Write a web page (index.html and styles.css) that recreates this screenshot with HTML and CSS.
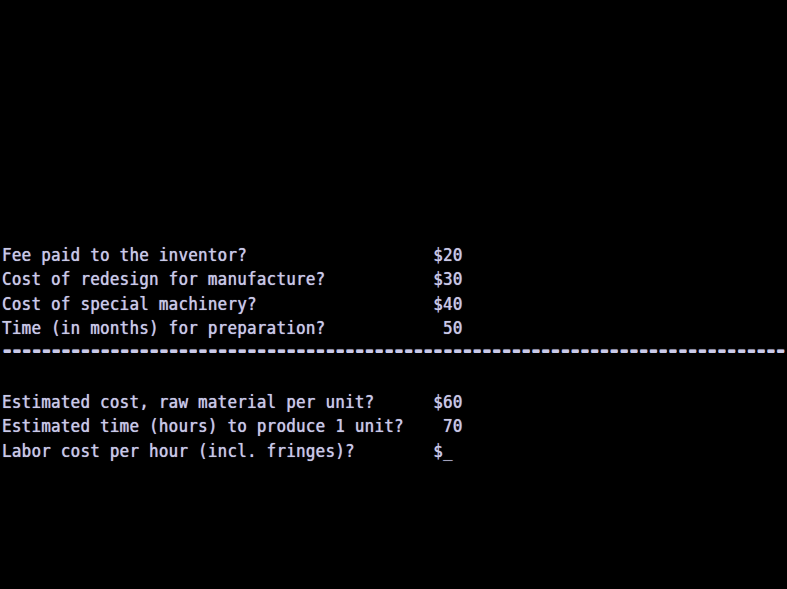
FILE: index.html
```html
<!DOCTYPE html>
<html>
<head>
<meta charset="utf-8">
<link rel="stylesheet" href="styles.css">
</head>
<body>
<main class="screen">
<pre class="term">Fee paid to the inventor?                   $20
Cost of redesign for manufacture?           $30
Cost of special machinery?                  $40
Time (in months) for preparation?            50
<span class="rule">--------------------------------------------------------------------------------</span>

Estimated cost, raw material per unit?      $60
Estimated time (hours) to produce 1 unit?    70
Labor cost per hour (incl. fringes)?        $_</pre>
</main>
</body>
</html>
```
FILE: styles.css
```css
html, body {
  margin: 0;
  padding: 0;
  background: #000;
}
.screen {
  width: 787px;
  height: 589px;
  background: #000;
  overflow: hidden;
  padding-top: 242.5px;
  padding-left: 1.5px;
  box-sizing: border-box;
}
.term {
  margin: 0;
  font-family: "DejaVu Sans Mono", monospace;
  font-size: 18px;
  letter-spacing: 0.3px;
  line-height: 24.54px;
  color: #cacae8;
  text-shadow: 0 0 1px rgba(200, 200, 240, 0.7), 0.4px 0 0 rgba(200, 200, 240, 0.5);
  white-space: pre;
  transform: scaleX(0.88);
  transform-origin: 0 0;
}
.rule {
  font-size: 30px;
  letter-spacing: -6.935px;
  line-height: 0;
  vertical-align: -0.5px;
  margin-left: -3.1px;
  text-shadow: 0 1px 0 #cacae8, 0 0 1px rgba(200, 200, 240, 0.7);
}
```
